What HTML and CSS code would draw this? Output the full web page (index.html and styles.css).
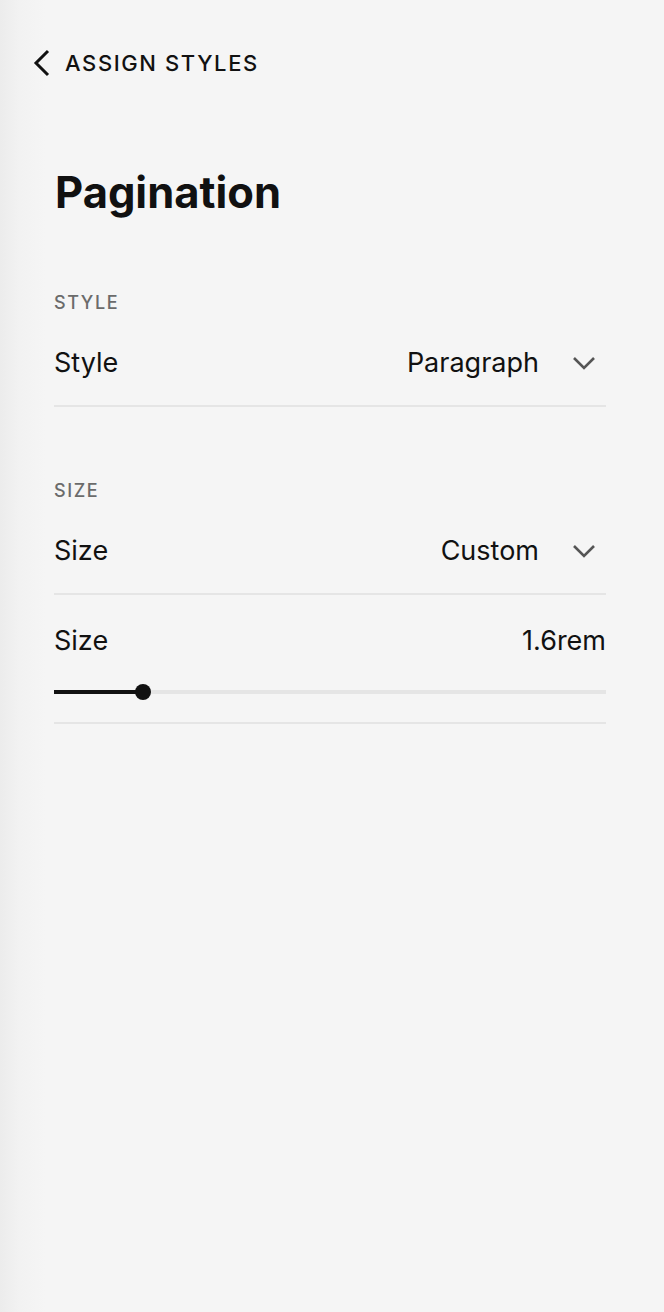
FILE: index.html
```html
<!DOCTYPE html>
<html>
<head>
<meta charset="utf-8">
<link rel="stylesheet" href="styles.css">
</head>
<body>
<div class="panel">
  <header class="back">
    <svg class="back-icon" width="20" height="28" viewBox="0 0 20 28"><path d="M16 2 L4 14 L16 26" fill="none" stroke="#111" stroke-width="3"/></svg>
    <span class="back-label">ASSIGN STYLES</span>
  </header>
  <main class="content">
    <h1 class="title">Pagination</h1>
    <section class="group group-style">
      <div class="group-label">STYLE</div>
      <div class="row select-row">
        <span class="row-label">Style</span>
        <span class="row-value">Paragraph<svg class="chev" width="24" height="14" viewBox="0 0 24 14"><path d="M2 2 L12 12 L22 2" fill="none" stroke="#555" stroke-width="2.6"/></svg></span>
      </div>
    </section>
    <section class="group group-size">
      <div class="group-label">SIZE</div>
      <div class="row select-row">
        <span class="row-label">Size</span>
        <span class="row-value">Custom<svg class="chev" width="24" height="14" viewBox="0 0 24 14"><path d="M2 2 L12 12 L22 2" fill="none" stroke="#555" stroke-width="2.6"/></svg></span>
      </div>
      <div class="slider-row">
        <div class="slider-head">
          <span class="row-label">Size</span>
          <span class="slider-value">1.6rem</span>
        </div>
        <div class="slider">
          <div class="track"></div>
          <div class="fill" style="width: 89px"></div>
          <div class="thumb" style="left: 89px"></div>
        </div>
      </div>
    </section>
  </main>
</div>
</body>
</html>
```
FILE: styles.css
```css
html, body {
  margin: 0;
  padding: 0;
}
body {
  background: #f5f5f5;
  font-family: Inter, "Liberation Sans", sans-serif;
  color: #111;
}
.panel {
  min-height: 1312px;
  background: linear-gradient(to right, #ececec 0px, #f2f2f2 20px, #f5f5f5 45px, #f5f5f5 100%);
  box-sizing: border-box;
}
.back {
  display: flex;
  align-items: center;
  padding: 49px 0 0 32px;
  height: 28px;
}
.back-icon {
  display: block;
}
.back-label {
  margin-left: 13px;
  font-size: 22px;
  font-weight: 500;
  letter-spacing: 1.6px;
  line-height: 28px;
}
.content {
  padding: 0 58px 0 54px;
}
.title {
  margin: 90px 0 0 1px;
  font-size: 43.5px;
  font-weight: 700;
  line-height: 50px;
  letter-spacing: 0;
}
.group-label {
  font-size: 18px;
  font-weight: 500;
  letter-spacing: 1.6px;
  color: #6b6b6b;
  line-height: 22px;
}
.group-style {
  margin-top: 75px;
}
.group-size {
  margin-top: 73px;
}
.row {
  display: flex;
  justify-content: space-between;
  align-items: center;
  border-bottom: 2px solid #e5e5e5;
}
.select-row {
  padding-top: 33px;
  padding-bottom: 26px;
}
.row-label {
  font-size: 27px;
  line-height: 32px;
}
.row-value {
  display: flex;
  align-items: center;
  font-size: 27px;
  line-height: 32px;
}
.chev {
  margin-left: 33px;
  margin-right: 10px;
}
.slider-row {
  border-bottom: 2px solid #e5e5e5;
  padding-top: 30px;
  padding-bottom: 22px;
}
.slider-head {
  display: flex;
  justify-content: space-between;
  align-items: center;
}
.slider-value {
  font-size: 27px;
  line-height: 32px;
}
.slider {
  position: relative;
  height: 16px;
  margin-top: 27px;
}
.track {
  position: absolute;
  left: 0;
  right: 0;
  top: 6px;
  height: 4px;
  background: #e5e5e5;
}
.fill {
  position: absolute;
  left: 0;
  top: 6px;
  height: 4px;
  background: #111;
}
.thumb {
  position: absolute;
  top: 0;
  width: 16px;
  height: 16px;
  margin-left: -8px;
  border-radius: 50%;
  background: #111;
}
```
